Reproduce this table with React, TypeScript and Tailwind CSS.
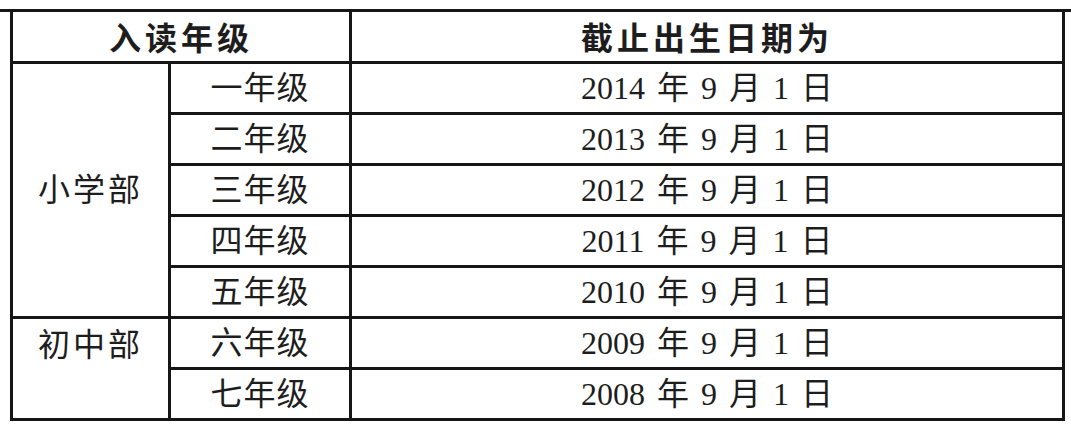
const rows = [
  { grade: '一年级', year: '2014' },
  { grade: '二年级', year: '2013' },
  { grade: '三年级', year: '2012' },
  { grade: '四年级', year: '2011' },
  { grade: '五年级', year: '2010' },
  { grade: '六年级', year: '2009' },
  { grade: '七年级', year: '2008' },
];

const cell = 'border-[3px] border-[#161616] p-0 text-center';

export default function App() {
  return (
    <div className="w-[1071px] h-[433px] overflow-hidden bg-white pt-[9px] font-[family-name:'Liberation_Serif','Noto_Sans_CJK_SC',serif] text-[#1d1d1d]">
      <div className="h-[3px] bg-[#161616]" />
      <table className="ml-[10px] w-[1055px] table-fixed border-collapse">
        <colgroup>
          <col className="w-[158px]" />
          <col className="w-[181px]" />
          <col />
        </colgroup>
        <thead>
          <tr>
            <th
              colSpan={2}
              className={`${cell} border-t-0 h-[50px] font-[family-name:'Noto_Sans_CJK_SC',sans-serif] text-[32px] font-bold tracking-[4px] leading-none`}
            >
              入读年级
            </th>
            <th className={`${cell} border-t-0 h-[50px] font-[family-name:'Noto_Sans_CJK_SC',sans-serif] text-[32px] font-bold tracking-[4px] leading-none`}>
              截止出生日期为
            </th>
          </tr>
        </thead>
        <tbody>
          {rows.map((r, i) => (
            <tr key={r.grade}>
              {i === 0 && (
                <td rowSpan={5} className={`${cell} text-[32px] tracking-[3px] leading-none`}>
                  小学部
                </td>
              )}
              {i === 5 && (
                <td rowSpan={2} className={`${cell} align-top pt-[10px] text-[32px] tracking-[3px] leading-[32px]`}>
                  初中部
                </td>
              )}
              <td className={`${cell} h-[51px] text-[32px] tracking-[1px] leading-none`}>{r.grade}</td>
              <td className={`${cell} h-[51px] text-[32px] leading-none [word-spacing:4px]`}>
                {r.year} 年 9 月 1 日
              </td>
            </tr>
          ))}
        </tbody>
      </table>
    </div>
  );
}
